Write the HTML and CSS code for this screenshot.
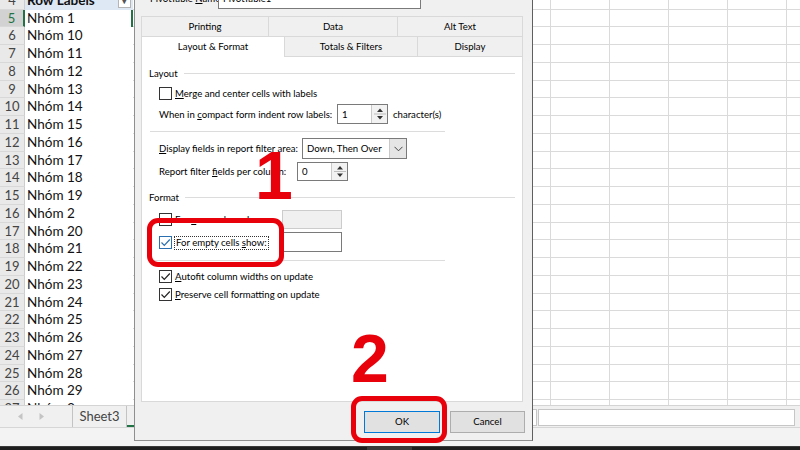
FILE: index.html
```html
<!DOCTYPE html>
<html lang="vi">
  <head>
    <meta charset="UTF-8" />
    <meta name="viewport" content="width=device-width, initial-scale=1.0" />
    <title>PivotTable Options</title>
    <link rel="stylesheet" href="styles.css">
  </head>
  <body>
    <div class="screen">
      <div class="sheet">
        <div class="row"><div class="rh">4</div><div class="ca head"><span>Row Labels</span><span class="filter-btn">▾</span></div><div class="cb"></div><div class="c"></div><div class="c"></div><div class="c"></div><div class="c"></div><div class="c"></div></div>
        <div class="row"><div class="rh sel">5</div><div class="ca sel">Nhóm 1</div><div class="cb"></div><div class="c"></div><div class="c"></div><div class="c"></div><div class="c"></div><div class="c"></div></div>
        <div class="row"><div class="rh">6</div><div class="ca">Nhóm 10</div><div class="cb"></div><div class="c"></div><div class="c"></div><div class="c"></div><div class="c"></div><div class="c"></div></div>
        <div class="row"><div class="rh">7</div><div class="ca">Nhóm 11</div><div class="cb"></div><div class="c"></div><div class="c"></div><div class="c"></div><div class="c"></div><div class="c"></div></div>
        <div class="row"><div class="rh">8</div><div class="ca">Nhóm 12</div><div class="cb"></div><div class="c"></div><div class="c"></div><div class="c"></div><div class="c"></div><div class="c"></div></div>
        <div class="row"><div class="rh">9</div><div class="ca">Nhóm 13</div><div class="cb"></div><div class="c"></div><div class="c"></div><div class="c"></div><div class="c"></div><div class="c"></div></div>
        <div class="row"><div class="rh">10</div><div class="ca">Nhóm 14</div><div class="cb"></div><div class="c"></div><div class="c"></div><div class="c"></div><div class="c"></div><div class="c"></div></div>
        <div class="row"><div class="rh">11</div><div class="ca">Nhóm 15</div><div class="cb"></div><div class="c"></div><div class="c"></div><div class="c"></div><div class="c"></div><div class="c"></div></div>
        <div class="row"><div class="rh">12</div><div class="ca">Nhóm 16</div><div class="cb"></div><div class="c"></div><div class="c"></div><div class="c"></div><div class="c"></div><div class="c"></div></div>
        <div class="row"><div class="rh">13</div><div class="ca">Nhóm 17</div><div class="cb"></div><div class="c"></div><div class="c"></div><div class="c"></div><div class="c"></div><div class="c"></div></div>
        <div class="row"><div class="rh">14</div><div class="ca">Nhóm 18</div><div class="cb"></div><div class="c"></div><div class="c"></div><div class="c"></div><div class="c"></div><div class="c"></div></div>
        <div class="row"><div class="rh">15</div><div class="ca">Nhóm 19</div><div class="cb"></div><div class="c"></div><div class="c"></div><div class="c"></div><div class="c"></div><div class="c"></div></div>
        <div class="row"><div class="rh">16</div><div class="ca">Nhóm 2</div><div class="cb"></div><div class="c"></div><div class="c"></div><div class="c"></div><div class="c"></div><div class="c"></div></div>
        <div class="row"><div class="rh">17</div><div class="ca">Nhóm 20</div><div class="cb"></div><div class="c"></div><div class="c"></div><div class="c"></div><div class="c"></div><div class="c"></div></div>
        <div class="row"><div class="rh">18</div><div class="ca">Nhóm 21</div><div class="cb"></div><div class="c"></div><div class="c"></div><div class="c"></div><div class="c"></div><div class="c"></div></div>
        <div class="row"><div class="rh">19</div><div class="ca">Nhóm 22</div><div class="cb"></div><div class="c"></div><div class="c"></div><div class="c"></div><div class="c"></div><div class="c"></div></div>
        <div class="row"><div class="rh">20</div><div class="ca">Nhóm 23</div><div class="cb"></div><div class="c"></div><div class="c"></div><div class="c"></div><div class="c"></div><div class="c"></div></div>
        <div class="row"><div class="rh">21</div><div class="ca">Nhóm 24</div><div class="cb"></div><div class="c"></div><div class="c"></div><div class="c"></div><div class="c"></div><div class="c"></div></div>
        <div class="row"><div class="rh">22</div><div class="ca">Nhóm 25</div><div class="cb"></div><div class="c"></div><div class="c"></div><div class="c"></div><div class="c"></div><div class="c"></div></div>
        <div class="row"><div class="rh">23</div><div class="ca">Nhóm 26</div><div class="cb"></div><div class="c"></div><div class="c"></div><div class="c"></div><div class="c"></div><div class="c"></div></div>
        <div class="row"><div class="rh">24</div><div class="ca">Nhóm 27</div><div class="cb"></div><div class="c"></div><div class="c"></div><div class="c"></div><div class="c"></div><div class="c"></div></div>
        <div class="row"><div class="rh">25</div><div class="ca">Nhóm 28</div><div class="cb"></div><div class="c"></div><div class="c"></div><div class="c"></div><div class="c"></div><div class="c"></div></div>
        <div class="row"><div class="rh">26</div><div class="ca">Nhóm 29</div><div class="cb"></div><div class="c"></div><div class="c"></div><div class="c"></div><div class="c"></div><div class="c"></div></div>
        <div class="row"><div class="rh">27</div><div class="ca">Nhóm 3</div><div class="cb"></div><div class="c"></div><div class="c"></div><div class="c"></div><div class="c"></div><div class="c"></div></div>
      </div>

      <div class="tabbar">
        <div class="tab-nav">
          <svg width="5" height="7" viewBox="0 0 5 7"><path d="M4.5 0 L0 3.5 L4.5 7 Z" fill="#c4c4c4"/></svg>
          <svg width="5" height="7" viewBox="0 0 5 7"><path d="M0.5 0 L5 3.5 L0.5 7 Z" fill="#c4c4c4"/></svg>
        </div>
        <div class="sheet-tab">Sheet3</div>
        <div class="tab-fill"></div>
        <div class="hscroll-wrap"><span class="split"></span><span class="hscroll"></span></div>
      </div>
      <div class="statusbar"></div>
      <div class="taskbar"><span class="task-item"></span></div>

      <!-- hộp thoại PivotTable Options -->
      <div class="dialog">
        <div class="name-row">
          <span class="name-label">PivotTable <u>N</u>ame:</span>
          <span class="name-input">PivotTable1</span>
        </div>

        <div class="tabs">
          <div class="tab-row">
            <span class="tab w-print">Printing</span>
            <span class="tab w-data">Data</span>
            <span class="tab w-alt">Alt Text</span>
          </div>
          <div class="tab-row">
            <span class="tab active w-layout">Layout &amp; Format</span>
            <span class="tab w-totals">Totals &amp; Filters</span>
            <span class="tab w-display">Display</span>
          </div>
        </div>

        <div class="panel">
          <div class="legend"><span>Layout</span></div>

          <div class="opt r-merge">
            <span class="chk"></span>
            <span><u>M</u>erge and center cells with labels</span>
          </div>

          <div class="opt r-compact">
            <span class="lbl w-compact">When in <u>c</u>ompact form indent row labels:</span>
            <span class="field w-num">
              <span class="val">1</span>
              <span class="spin">
                <svg width="14" height="18" viewBox="0 0 14 18"><path d="M4 7 L7 3.5 L10 7 Z" fill="#333"/><path d="M1 9 H13" stroke="#bdbdbd" stroke-width="1"/><path d="M4 11 L7 14.5 L10 11 Z" fill="#333"/></svg>
              </span>
            </span>
            <span class="after">character(s)</span>
          </div>

          <div class="sep"></div>

          <div class="opt r-display">
            <span class="lbl w-display-lbl"><u>D</u>isplay fields in report filter area:</span>
            <span class="field select">
              <span class="val">Down, Then Over</span>
              <span class="drop">
                <svg width="9" height="6" viewBox="0 0 9 6"><path d="M0.5 0.8 L4.5 4.8 L8.5 0.8" fill="none" stroke="#444" stroke-width="1"/></svg>
              </span>
            </span>
          </div>

          <div class="opt r-report">
            <span class="lbl w-report">Report filter <u>f</u>ields per column:</span>
            <span class="field w-num small">
              <span class="val">0</span>
              <span class="spin">
                <svg width="14" height="17" viewBox="0 0 14 17"><path d="M4 6.5 L7 3 L10 6.5 Z" fill="#333"/><path d="M1 8.5 H13" stroke="#bdbdbd" stroke-width="1"/><path d="M4 10.5 L7 14 L10 10.5 Z" fill="#333"/></svg>
              </span>
            </span>
          </div>

          <div class="legend format"><span>Format</span></div>

          <div class="opt r-error">
            <span class="chk"></span>
            <span class="lbl w-fmt">For <u>e</u>rror values show:</span>
            <span class="field w-fmt-input disabled"></span>
          </div>

          <div class="opt r-empty">
            <span class="chk checked focus">
              <svg width="11" height="11" viewBox="0 0 11 11"><path d="M1.5 5.5 L4.3 8.3 L9.8 2.5" fill="none" stroke="#2a6fb0" stroke-width="1.2"/></svg>
            </span>
            <span class="lbl w-fmt"><span class="focus-text">For empty cells <u>s</u>how:</span></span>
            <span class="field w-fmt-input tall"></span>
          </div>

          <div class="sep sep-2"></div>

          <div class="opt r-autofit">
            <span class="chk checked">
              <svg width="11" height="11" viewBox="0 0 11 11"><path d="M1.5 5.5 L4.3 8.3 L9.8 2.5" fill="none" stroke="#222" stroke-width="1.2"/></svg>
            </span>
            <span><u>A</u>utofit column widths on update</span>
          </div>

          <div class="opt r-preserve">
            <span class="chk checked">
              <svg width="11" height="11" viewBox="0 0 11 11"><path d="M1.5 5.5 L4.3 8.3 L9.8 2.5" fill="none" stroke="#222" stroke-width="1.2"/></svg>
            </span>
            <span><u>P</u>reserve cell formatting on update</span>
          </div>
        </div>

        <div class="buttons">
          <span class="btn default">OK</span>
          <span class="btn">Cancel</span>
        </div>
      </div>

      <!-- chú thích màu đỏ -->
      <div class="ring ring-1"></div>
      <div class="ring ring-2"></div>
      <div class="mark mark-1">1</div>
      <div class="mark mark-2">2</div>
    </div>
  </body>
</html>
```

FILE: styles.css
```css
* {
  box-sizing: border-box;
}

body {
  margin: 0;
  padding: 0;
  background-color: #fff;
  font-family: Lato, "Liberation Sans", sans-serif;
}

.screen {
  position: relative;
  width: 800px;
  height: 450px;
  overflow: hidden;
  display: flex;
  flex-direction: column;
}

/* bảng tính */
.sheet {
  flex: none;
  height: 413.25px;
  margin-top: -8.25px;
  overflow: hidden;
}

.row {
  display: flex;
  height: 17.75px;
}

.rh {
  flex: none;
  width: 25px;
  background-color: #e9e9e9;
  border-right: 1px solid #cdcdcd;
  border-bottom: 1px solid #d8d8d8;
  color: #444;
  font-size: 13px;
  line-height: 17px;
  text-align: center;
}

.rh.sel {
  background-color: #d2d2d2;
  color: #217346;
  border-right: 2px solid #217346;
}

.ca {
  flex: none;
  width: 108px;
  padding-left: 2px;
  color: #111;
  font-size: 13.5px;
  line-height: 17.75px;
  white-space: nowrap;
}

.ca.sel {
  box-shadow: inset -2px 0 0 #217346;
}

.ca.head {
  display: flex;
  align-items: center;
  justify-content: space-between;
  padding-right: 2px;
  background-color: #dde8f4;
  font-weight: bold;
}

.filter-btn {
  width: 13px;
  height: 14px;
  background-color: #fff;
  border: 1px solid #b5b5b5;
  color: #555;
  font-size: 9px;
  line-height: 12px;
  text-align: center;
}

.cb {
  flex: none;
  width: 418px;
  border-right: 1px solid #dadada;
  border-bottom: 1px solid #dadada;
}

.c {
  flex: none;
  width: 59px;
  border-right: 1px solid #dadada;
  border-bottom: 1px solid #dadada;
}

/* thanh sheet */
.tabbar {
  flex: none;
  display: flex;
  height: 22px;
  background-color: #f0f0f0;
  border-top: 1px solid #d4d4d4;
}

.tab-nav {
  width: 72px;
  display: flex;
  align-items: center;
  gap: 16px;
  padding-left: 18px;
}

.sheet-tab {
  width: 55px;
  border-left: 1px solid #c3c3c3;
  border-right: 1px solid #c3c3c3;
  color: #444;
  font-size: 13px;
  line-height: 20px;
  text-align: center;
}

.tab-fill {
  flex: 1;
  border-bottom: 2px solid #217346;
}

.hscroll-wrap {
  width: 268px;
  display: flex;
  padding: 3px 5px 1px 0;
  gap: 1px;
}

.split {
  width: 5px;
  border: 1px solid #c6c6c6;
  background-color: #fff;
}

.hscroll {
  flex: 1;
  border: 1px solid #c6c6c6;
  background-color: #fff;
}

.statusbar {
  flex: none;
  height: 19px;
  background-color: #f3f3f3;
  border-top: 1px solid #d6d6d6;
}

.taskbar {
  flex: 1;
  background-color: #1e1e1e;
  border-top: 1px solid #3a3a3a;
}

.task-item {
  display: block;
  width: 45px;
  height: 100%;
  margin-left: 367px;
  background-color: #3a3a3a;
}

/* hộp thoại */
.dialog {
  position: absolute;
  left: 134px;
  top: -14px;
  width: 399px;
  height: 455px;
  padding: 0 8px 0 6px;
  background-color: #f0f0f0;
  border: 1px solid #8f8f8f;
  border-right-color: #5f5f5f;
  color: #000;
  font-size: 9.6px;
}

.name-row {
  display: flex;
  align-items: center;
  height: 22px;
}

.name-label {
  width: 68px;
  margin-left: 9px;
  white-space: nowrap;
}

.name-input {
  width: 203px;
  height: 21px;
  padding-left: 4px;
  background-color: #fff;
  border: 1px solid #7a7a7a;
  line-height: 19px;
}

.tabs {
  width: 382px;
  margin-top: 7px;
}

.tab-row {
  display: flex;
  height: 20px;
}

.tab {
  height: 20px;
  border: 1px solid #d9d9d9;
  border-bottom: none;
  border-right: none;
  background-color: #f0f0f0;
  line-height: 19px;
  text-align: center;
}

.tab:last-child {
  border-right: 1px solid #d9d9d9;
}

.tab.active {
  position: relative;
  z-index: 1;
  height: 21px;
  background-color: #fff;
}

.w-print { width: 127px; }
.w-data { width: 129px; }
.w-alt { width: 126px; }
.w-layout { width: 143px; }
.w-totals { width: 133px; }
.w-display { width: 106px; }

.panel {
  width: 382px;
  height: 346px;
  padding: 0 7px;
  background-color: #fff;
  border: 1px solid #d9d9d9;
}

.legend {
  display: flex;
  align-items: center;
  height: 14px;
  margin-top: 9px;
}

.legend::after {
  content: "";
  flex: 1;
  margin-left: 6px;
  border-top: 1px solid #dcdcdc;
}

.legend.format {
  margin-top: 9px;
}

.opt {
  display: flex;
  align-items: center;
  margin-left: 10px;
  white-space: nowrap;
}

.chk {
  flex: none;
  display: flex;
  align-items: center;
  justify-content: center;
  width: 13px;
  height: 13px;
  margin-right: 3px;
  background-color: #fff;
  border: 1px solid #333;
}

.chk.focus {
  border-color: #2a6fb0;
}

.lbl {
  flex: none;
}

.w-compact { width: 178px; }
.w-display-lbl { width: 143px; }
.w-report { width: 138px; }
.w-fmt { width: 107px; }

.field {
  flex: none;
  display: flex;
  align-items: center;
  height: 20px;
  background-color: #fff;
  border: 1px solid #7a7a7a;
}

.field .val {
  flex: 1;
  padding-left: 4px;
}

.w-num { width: 51px; }
.w-num.small { height: 19px; }

.spin {
  display: flex;
  align-items: center;
  justify-content: center;
  width: 16px;
  height: 100%;
  background-color: #f2f2f2;
  border-left: 1px solid #c9c9c9;
}

.after {
  margin-left: 5px;
}

.select {
  width: 105px;
  height: 21px;
}

.drop {
  display: flex;
  align-items: center;
  justify-content: center;
  width: 17px;
  height: 100%;
  background-color: #e5e5e5;
  border-left: 1px solid #c9c9c9;
}

.w-fmt-input {
  width: 60px;
  height: 19px;
}

.w-fmt-input.tall {
  height: 20px;
}

.field.disabled {
  background-color: #f0f0f0;
  border-color: #cccccc;
}

.focus-text {
  padding: 0 1px 1px;
  outline: 1px dotted #333;
}

.sep {
  width: 295px;
  margin-left: 1px;
  border-top: 1px solid #dcdcdc;
}

.r-merge { height: 20px; margin-top: 3px; }
.r-compact { height: 20px; margin-top: 1px; }
.sep { margin-top: 7px; }
.r-display { height: 21px; margin-top: 6px; }
.r-report { height: 19px; margin-top: 3px; }
.r-error { height: 20px; margin-top: 5px; }
.r-empty { height: 20px; margin-top: 3px; }
.sep-2 { margin-top: 8px; }
.r-autofit { height: 16px; margin-top: 7px; }
.r-preserve { height: 16px; margin-top: 2px; }

.buttons {
  display: flex;
  justify-content: flex-end;
  gap: 10px;
  margin-top: 9px;
  margin-right: -1px;
}

.btn {
  width: 75px;
  height: 22px;
  background-color: #e1e1e1;
  border: 1px solid #adadad;
  line-height: 20px;
  text-align: center;
}

.btn.default {
  width: 76px;
  border-color: #0078d7;
}

/* chú thích */
.ring {
  position: absolute;
  border: 5px solid #e8000b;
  border-radius: 11px;
}

.ring-1 {
  left: 147px;
  top: 218px;
  width: 137px;
  height: 49px;
}

.ring-2 {
  left: 351px;
  top: 396px;
  width: 96px;
  height: 47px;
}

.mark {
  position: absolute;
  color: #e8000b;
  font-family: "Liberation Sans", Arial, sans-serif;
  font-size: 68px;
  font-weight: bold;
  line-height: 68px;
}

.mark-1 {
  left: 255px;
  top: 141px;
}

.mark-2 {
  left: 351px;
  top: 324px;
}
```
